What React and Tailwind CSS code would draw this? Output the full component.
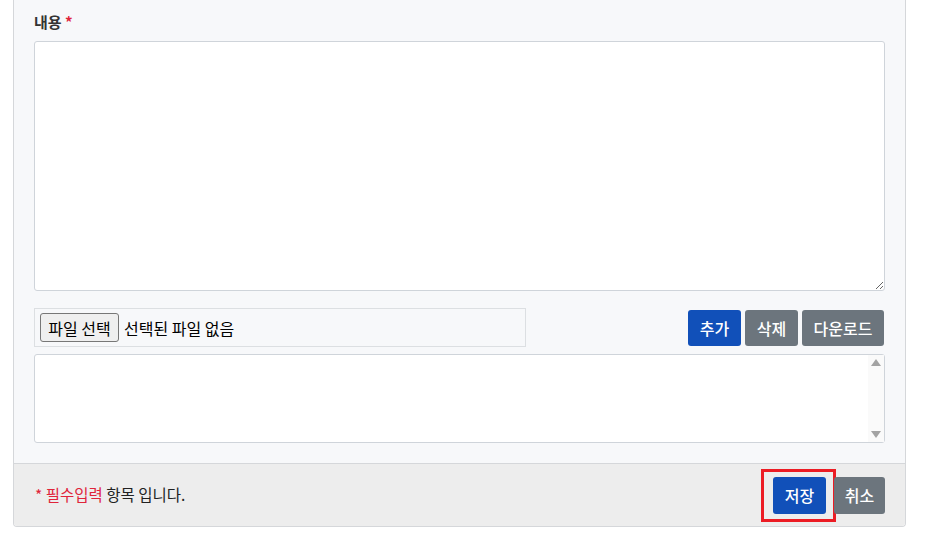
import React from 'react'

const font = { fontFamily: '"Noto Sans CJK KR", "Noto Sans", sans-serif' }

const App = () => {
    return (
        <div className="w-[930px] h-[554px] bg-white" style={font}>
            <div className="ml-[13px] w-[893px] border-x border-b border-[#d5d7da] rounded-b-[4px] overflow-hidden">
                <div className="bg-[#f7f8fa] px-[20px] pt-[12px] pb-[20px]">
                    <label className="block text-[15px] font-bold text-[#333] leading-[20px]">
                        내용 <span className="text-[#e0243a]">*</span>
                    </label>
                    <textarea className="mt-[9px] block w-[851px] h-[250px] bg-white border border-[#cfd4da] rounded-[3px] outline-none"></textarea>

                    <div className="mt-[17px] flex items-center justify-between">
                        <div className="w-[492px] h-[39px] flex items-center gap-[5px] px-[5px] border border-[#dcdfe2] bg-[#f7f8fa]">
                            <span className="h-[29px] w-[79px] flex items-center justify-center border border-[#777] rounded-[3px] bg-[#efefef] text-[16px] text-black">파일 선택</span>
                            <span className="text-[16px] text-black">선택된 파일 없음</span>
                        </div>
                        <div className="flex gap-[4px] mr-[1px]">
                            <button className="h-[36px] w-[53px] rounded-[3px] bg-[#1150b9] text-white text-[16px] font-medium">추가</button>
                            <button className="h-[36px] w-[53px] rounded-[3px] bg-[#6c757d] text-white text-[16px] font-medium">삭제</button>
                            <button className="h-[36px] w-[82px] rounded-[3px] bg-[#6c757d] text-white text-[16px] font-medium">다운로드</button>
                        </div>
                    </div>

                    <div className="mt-[7px] w-[851px] h-[89px] flex bg-white border border-[#cfd4da] rounded-[3px]">
                        <div className="flex-1"></div>
                        <div className="w-[16px] flex flex-col items-center justify-between py-[4px] bg-[#fafafa]">
                            <span className="w-0 h-0 border-x-[5px] border-x-transparent border-b-[7px] border-b-[#a3a3a3]"></span>
                            <span className="w-0 h-0 border-x-[5px] border-x-transparent border-t-[7px] border-t-[#a3a3a3]"></span>
                        </div>
                    </div>
                </div>

                <div className="h-[63px] bg-[#ededed] border-t border-[#d5d7da] flex items-center justify-between pl-[21px] pr-[20px]">
                    <p className="text-[15.5px] text-[#222]">
                        <span className="text-[#e0243a]">* 필수입력</span> 항목 입니다.
                    </p>
                    <div className="flex items-center">
                        <div className="border-[3px] border-[#ec1c24] pl-[9px] pr-[7px] py-[5px]">
                            <button className="block h-[37px] w-[53px] rounded-[3px] bg-[#1150b9] text-white text-[16px] font-medium">저장</button>
                        </div>
                        <button className="h-[37px] w-[51px] -ml-[2px] rounded-[3px] bg-[#6c757d] text-white text-[16px] font-medium">취소</button>
                    </div>
                </div>
            </div>
        </div>
    )
}

export default App
